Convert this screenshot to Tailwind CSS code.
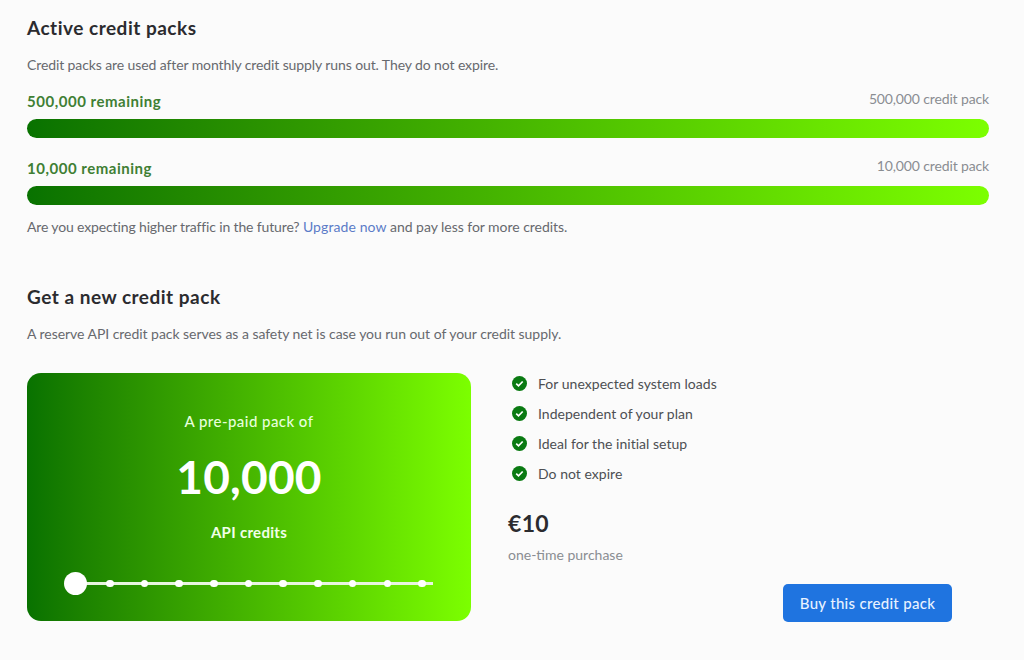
<!DOCTYPE html>
<html lang="en">
<head>
  <meta charset="UTF-8" />
  <title>Credit packs</title>
  <script src="https://cdn.jsdelivr.net/npm/@tailwindcss/browser@4"></script>
</head>
<body class="bg-[#fbfbfb] font-['Lato',sans-serif] text-[14px] text-[#67696e]">
  <div class="w-[1024px] h-[660px] overflow-hidden pl-[27px] pr-[35px] pt-[16px]">
    <h2 class="h-[23px] leading-[23px] text-[19px] font-bold tracking-[0.5px] text-[#2b2b2f]">Active credit packs</h2>
    <p class="mt-[16px] h-[20px] leading-[20px] tracking-[-0.1px]">Credit packs are used after monthly credit supply runs out. They do not expire.</p>

    <div class="mt-[14px] flex justify-between items-start h-[24px]">
      <span class="leading-[24px] text-[15px] font-bold tracking-[0.52px] text-[#3f7f34]">500,000 remaining</span>
      <span class="leading-[20px] tracking-[-0.14px] text-[#8a8d92]">500,000 credit pack</span>
    </div>
    <div class="mt-[6px] h-[19px] rounded-full bg-linear-to-r from-[#087200] to-[#7cff00]"></div>

    <div class="mt-[18px] flex justify-between items-start h-[24px]">
      <span class="leading-[24px] text-[15px] font-bold tracking-[0.52px] text-[#3f7f34]">10,000 remaining</span>
      <span class="leading-[20px] tracking-[-0.14px] text-[#8a8d92]">10,000 credit pack</span>
    </div>
    <div class="mt-[6px] h-[19px] rounded-full bg-linear-to-r from-[#087200] to-[#7cff00]"></div>

    <p class="mt-[12px] h-[20px] leading-[20px] tracking-[-0.14px]">Are you expecting higher traffic in the future? <a class="text-[#5b7cc8] tracking-[0.1px]">Upgrade now</a> <span class="tracking-[-0.04px]">and pay less for more credits.</span></p>

    <h2 class="mt-[48px] h-[23px] leading-[23px] text-[19px] font-bold tracking-[0.5px] text-[#2b2b2f]">Get a new credit pack</h2>
    <p class="mt-[16px] h-[20px] leading-[20px] tracking-[-0.04px]">A reserve API credit pack serves as a safety net is case you run out of your credit supply.</p>

    <div class="mt-[29px] flex">
      <div class="w-[444px] h-[248px] rounded-[14px] bg-linear-to-r from-[#087200] to-[#7cff00] text-white flex flex-col items-center">
        <div class="mt-[38px] h-[20px] leading-[20px] text-[15px] font-medium tracking-[0.45px] text-[#e6ffdc]">A pre-paid pack of</div>
        <div class="mt-[18px] h-[56px] leading-[56px] text-[46px] font-bold tracking-[0.2px]">10,000</div>
        <div class="mt-[17px] h-[20px] leading-[20px] text-[15px] font-bold tracking-[0.3px] text-[#f0ffe8]">API credits</div>
        <div class="relative mt-[30px] w-[358px] h-[24px] self-start ml-[48px]">
          <div class="absolute left-0 right-0 top-[10px] h-[3px] bg-[#e8f5e0]"></div>
          <div class="absolute left-[-11.5px] right-[11px] top-0 flex items-center h-[23px]">
            <div class="w-[23px] h-[23px] rounded-full bg-white shrink-0"></div>
            <div class="flex ml-[19.5px] gap-[27.2px]">
              <i class="block w-[7.5px] h-[7.5px] rounded-full bg-white"></i>
              <i class="block w-[7.5px] h-[7.5px] rounded-full bg-white"></i>
              <i class="block w-[7.5px] h-[7.5px] rounded-full bg-white"></i>
              <i class="block w-[7.5px] h-[7.5px] rounded-full bg-white"></i>
              <i class="block w-[7.5px] h-[7.5px] rounded-full bg-white"></i>
              <i class="block w-[7.5px] h-[7.5px] rounded-full bg-white"></i>
              <i class="block w-[7.5px] h-[7.5px] rounded-full bg-white"></i>
              <i class="block w-[7.5px] h-[7.5px] rounded-full bg-white"></i>
              <i class="block w-[7.5px] h-[7.5px] rounded-full bg-white"></i>
              <i class="block w-[7.5px] h-[7.5px] rounded-full bg-white"></i>
            </div>
          </div>
        </div>
      </div>

      <div class="ml-[37px] flex-1 flex flex-col">
        <ul class="flex flex-col gap-[10px] text-[#4d4f53] tracking-[0.03px]">
          <li class="flex items-center h-[20px] gap-[11px] pl-[4px]">
            <svg class="w-[15px] h-[15px]" viewBox="0 0 15 15"><circle cx="7.5" cy="7.5" r="7.5" fill="#0a7a12"/><path d="M4.2 7.7l2.3 2.2 4.2-4.4" fill="none" stroke="#fff" stroke-width="1.7"/></svg>
            For unexpected system loads
          </li>
          <li class="flex items-center h-[20px] gap-[11px] pl-[4px]">
            <svg class="w-[15px] h-[15px]" viewBox="0 0 15 15"><circle cx="7.5" cy="7.5" r="7.5" fill="#0a7a12"/><path d="M4.2 7.7l2.3 2.2 4.2-4.4" fill="none" stroke="#fff" stroke-width="1.7"/></svg>
            Independent of your plan
          </li>
          <li class="flex items-center h-[20px] gap-[11px] pl-[4px]">
            <svg class="w-[15px] h-[15px]" viewBox="0 0 15 15"><circle cx="7.5" cy="7.5" r="7.5" fill="#0a7a12"/><path d="M4.2 7.7l2.3 2.2 4.2-4.4" fill="none" stroke="#fff" stroke-width="1.7"/></svg>
            Ideal for the initial setup
          </li>
          <li class="flex items-center h-[20px] gap-[11px] pl-[4px]">
            <svg class="w-[15px] h-[15px]" viewBox="0 0 15 15"><circle cx="7.5" cy="7.5" r="7.5" fill="#0a7a12"/><path d="M4.2 7.7l2.3 2.2 4.2-4.4" fill="none" stroke="#fff" stroke-width="1.7"/></svg>
            Do not expire
          </li>
        </ul>
        <div class="mt-[25px] h-[30px] leading-[30px] text-[23px] font-bold tracking-[0.3px] text-[#2b2b2f]">€10</div>
        <div class="mt-[7px] h-[20px] leading-[20px] tracking-[0px] text-[#8a8d92]">one-time purchase</div>
        <button class="mt-[19px] ml-[275px] w-[169px] h-[38px] rounded-[5px] bg-[#1f74e0] text-[15px] font-medium tracking-[0.3px] text-[#e8f2ff]">Buy this credit pack</button>
      </div>
    </div>
  </div>
</body>
</html>
